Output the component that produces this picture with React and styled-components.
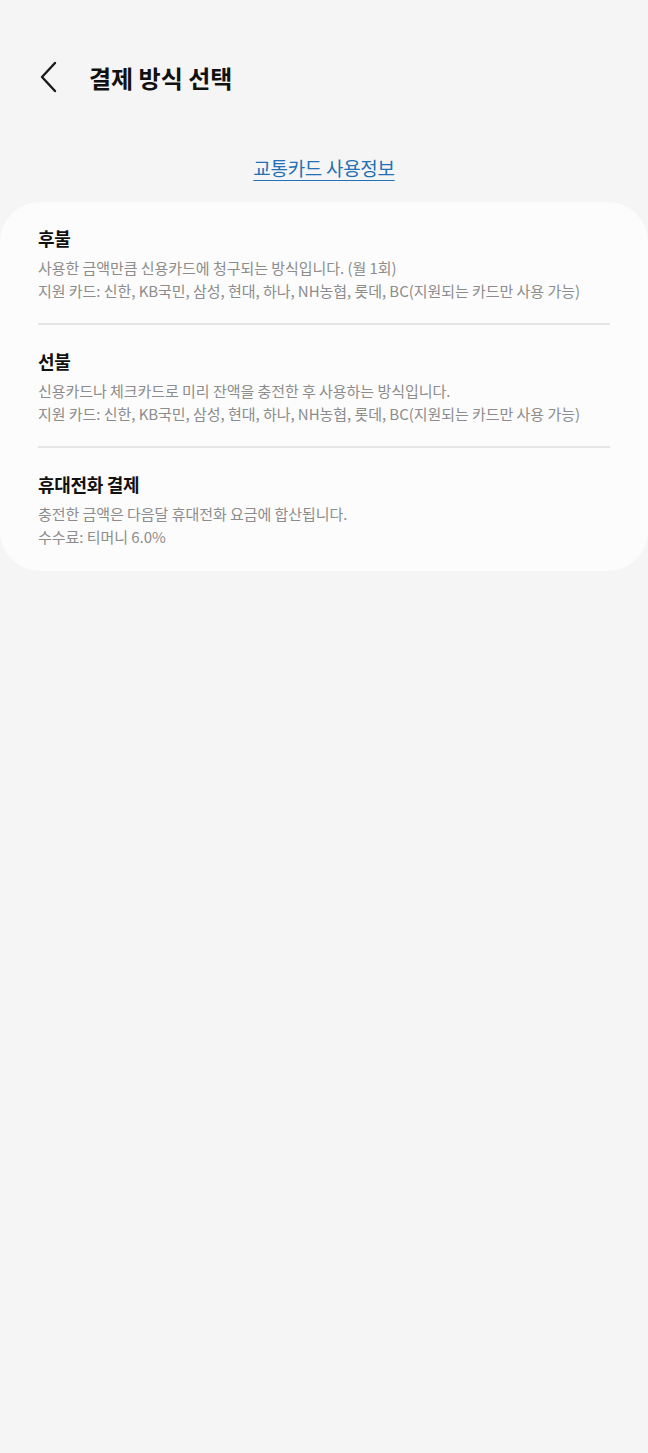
import React from 'react';
import styled, { createGlobalStyle } from 'styled-components';

const GlobalStyle = createGlobalStyle`
  html, body {
    margin: 0;
    padding: 0;
    background: #f5f5f5;
  }
  body {
    font-family: "Noto Sans CJK KR", "Noto Sans", sans-serif;
    -webkit-font-smoothing: antialiased;
  }
`;

const methods = [
  {
    title: '후불',
    lines: [
      '사용한 금액만큼 신용카드에 청구되는 방식입니다. (월 1회)',
      '지원 카드: 신한, KB국민, 삼성, 현대, 하나, NH농협, 롯데, BC(지원되는 카드만 사용 가능)',
    ],
  },
  {
    title: '선불',
    lines: [
      '신용카드나 체크카드로 미리 잔액을 충전한 후 사용하는 방식입니다.',
      '지원 카드: 신한, KB국민, 삼성, 현대, 하나, NH농협, 롯데, BC(지원되는 카드만 사용 가능)',
    ],
  },
  {
    title: '휴대전화 결제',
    lines: ['충전한 금액은 다음달 휴대전화 요금에 합산됩니다.', '수수료: 티머니 6.0%'],
  },
];

const Page = styled.div`
  min-height: 1453px;
  background: #f5f5f5;
`;

const Header = styled.header`
  display: flex;
  align-items: center;
  height: 56px;
  padding: 49px 0 0 34px;
`;

const BackButton = styled.button`
  display: flex;
  align-items: center;
  justify-content: center;
  width: 30px;
  height: 40px;
  padding: 0;
  border: none;
  background: none;
  color: #1a1a1a;
  cursor: pointer;
`;

const Title = styled.h1`
  margin: 0 0 0 25px;
  font-size: 24px;
  font-weight: 700;
  letter-spacing: 0;
  color: #111;
`;

const LinkRow = styled.div`
  display: flex;
  justify-content: center;
  padding-top: 49px;
  height: 48px;
`;

const InfoLink = styled.a`
  font-size: 19px;
  color: #2271b5;
  text-decoration: underline;
  text-decoration-thickness: 1px;
  text-underline-offset: 4px;
  letter-spacing: -0.3px;
  cursor: pointer;
`;

const Card = styled.section`
  background: #fcfcfc;
  border-radius: 40px;
  padding: 0 38px;
`;

const Item = styled.div`
  padding: ${(p) => (p.last ? '21px 0 23px' : '21px 0 21px')};
  border-top: ${(p) => (p.first ? 'none' : '2px solid #e6e6e6')};
`;

const ItemTitle = styled.div`
  font-size: 18px;
  font-weight: 700;
  color: #111;
  line-height: 30px;
  letter-spacing: -0.3px;
`;

const Desc = styled.div`
  margin-top: 3px;
  font-size: 15px;
  line-height: 23px;
  color: #8c8c8c;
  letter-spacing: -0.05px;
  white-space: nowrap;
`;

export default function App() {
  return (
    <Page>
      <GlobalStyle />
      <Header>
        <BackButton aria-label="뒤로">
          <svg width="20" height="32" viewBox="0 0 20 32" fill="none">
            <path d="M16 2 L3 16 L16 30" stroke="currentColor" strokeWidth="2.4" strokeLinecap="round" strokeLinejoin="round" />
          </svg>
        </BackButton>
        <Title>결제 방식 선택</Title>
      </Header>
      <LinkRow>
        <InfoLink>교통카드 사용정보</InfoLink>
      </LinkRow>
      <Card>
        {methods.map((m, i) => (
          <Item key={m.title} first={i === 0} last={i === methods.length - 1}>
            <ItemTitle>{m.title}</ItemTitle>
            <Desc>
              {m.lines.map((l) => (
                <div key={l}>{l}</div>
              ))}
            </Desc>
          </Item>
        ))}
      </Card>
    </Page>
  );
}
